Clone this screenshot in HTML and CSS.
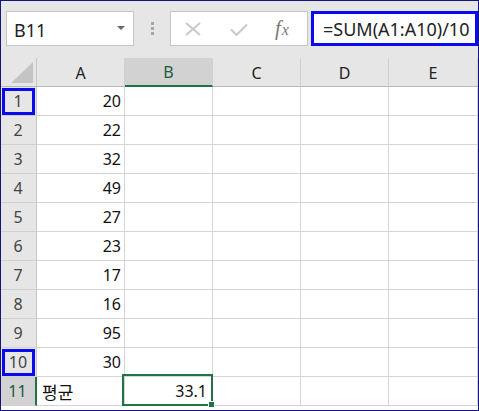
FILE: index.html
```html
<!DOCTYPE html>
<html>
<head>
<meta charset="utf-8">
<link rel="stylesheet" href="styles.css">
</head>
<body>
<div class="frame">
  <div class="toolbar">
    <div class="namebox">
      <span class="name">B11</span>
      <svg class="dd" width="8" height="4" viewBox="0 0 8 4"><polygon points="0,0 8,0 4,4" fill="#6a6a6a"/></svg>
    </div>
    <div class="dots"><span></span><span></span><span></span></div>
    <div class="fxbox">
      <svg class="ico-x" width="16" height="14" viewBox="0 0 16 14"><path d="M1 1 L15 13 M15 1 L1 13" stroke="#c8c8c8" stroke-width="2" fill="none"/></svg>
      <svg class="ico-ok" width="18" height="13" viewBox="0 0 18 13"><path d="M1 6.5 L6.5 12 L17 1.5" stroke="#c8c8c8" stroke-width="2" fill="none"/></svg>
      <span class="fx"><i>f</i><i class="fx-x">x</i></span>
    </div>
    <div class="formula">=SUM(A1:A10)/10</div>
  </div>
  <div class="sheet">
    <div class="hd corner"><svg width="22" height="21" viewBox="0 0 22 21"><polygon points="22,0 22,21 0,21" fill="#c4c4c4"/></svg></div>
    <div class="hd col">A</div>
    <div class="hd col sel-col">B</div>
    <div class="hd col">C</div>
    <div class="hd col">D</div>
    <div class="hd col last">E</div>

    <div class="hd row mark">1</div><div class="c num">20</div><div class="c"></div><div class="c"></div><div class="c"></div><div class="c last"></div>
    <div class="hd row">2</div><div class="c num">22</div><div class="c"></div><div class="c"></div><div class="c"></div><div class="c last"></div>
    <div class="hd row">3</div><div class="c num">32</div><div class="c"></div><div class="c"></div><div class="c"></div><div class="c last"></div>
    <div class="hd row">4</div><div class="c num">49</div><div class="c"></div><div class="c"></div><div class="c"></div><div class="c last"></div>
    <div class="hd row">5</div><div class="c num">27</div><div class="c"></div><div class="c"></div><div class="c"></div><div class="c last"></div>
    <div class="hd row">6</div><div class="c num">23</div><div class="c"></div><div class="c"></div><div class="c"></div><div class="c last"></div>
    <div class="hd row">7</div><div class="c num">17</div><div class="c"></div><div class="c"></div><div class="c"></div><div class="c last"></div>
    <div class="hd row">8</div><div class="c num">16</div><div class="c"></div><div class="c"></div><div class="c"></div><div class="c last"></div>
    <div class="hd row">9</div><div class="c num">95</div><div class="c"></div><div class="c"></div><div class="c"></div><div class="c last"></div>
    <div class="hd row mark">10</div><div class="c num">30</div><div class="c"></div><div class="c"></div><div class="c"></div><div class="c last"></div>
    <div class="hd row sel-row">11</div><div class="c txt">평균</div><div class="c num active">33.1</div><div class="c"></div><div class="c"></div><div class="c last"></div>
  </div>
</div>
</body>
</html>
```
FILE: styles.css
```css
html, body {
  margin: 0;
  padding: 0;
  background: #ffffff;
}
.frame {
  width: 477px;
  height: 409px;
  border: 1px solid #16167a;
  background: #ffffff;
  font-family: "Noto Sans", "Noto Sans CJK KR", sans-serif;
  overflow: hidden;
}
.toolbar {
  height: 57px;
  box-sizing: border-box;
  background: #e6e6e6;
  display: flex;
  align-items: flex-start;
  padding: 10px 0 0 5px;
}
.namebox {
  width: 128px;
  height: 35px;
  box-sizing: border-box;
  border: 1px solid #c6c6c6;
  background: #ffffff;
  display: flex;
  align-items: center;
  justify-content: space-between;
  padding: 2px 8px 0 7px;
}
.name {
  font-size: 18px;
  color: #222222;
}
.dd {
  margin-bottom: 3px;
}
.dots {
  width: 3px;
  margin: 11px 0 0 17px;
  display: flex;
  flex-direction: column;
  gap: 2px;
}
.dots span {
  width: 3px;
  height: 3px;
  background: #a6a6a6;
}
.fxbox {
  width: 138px;
  height: 35px;
  box-sizing: border-box;
  margin-left: 16px;
  border: 1px solid #c6c6c6;
  background: #ffffff;
  display: flex;
  align-items: center;
  padding-left: 14px;
}
.ico-x {
  margin-top: 1px;
}
.ico-ok {
  margin-left: 29px;
  margin-top: 2px;
}
.fx {
  margin-left: 27px;
  font-family: "Liberation Serif", "DejaVu Serif", serif;
  font-size: 21px;
  color: #7a7a7a;
  margin-top: -1px;
}
.fx i {
  font-style: italic;
}
.fx-x {
  font-size: 16px;
  margin-left: 1px;
}
.formula {
  width: 167px;
  height: 35px;
  box-sizing: border-box;
  margin-left: 3px;
  border: 3px solid #0a0af0;
  background: #ffffff;
  font-size: 18px;
  color: #222222;
  padding: 2px 0 0 9px;
  line-height: 26px;
  white-space: nowrap;
  overflow: hidden;
}
.sheet {
  display: grid;
  grid-template-columns: 36px 88px 88px 88px 88px 89px;
  grid-auto-rows: 29px;
  font-size: 16px;
}
.hd {
  box-sizing: border-box;
  background: #e6e6e6;
  color: #444444;
  display: flex;
  align-items: center;
  justify-content: center;
  position: relative;
}
.corner {
  border-right: 1px solid #c6c6c6;
  border-bottom: 1px solid #b8b8b8;
  justify-content: flex-end;
  align-items: flex-end;
  padding: 0 3px 3px 0;
}
.col {
  border-right: 1px solid #d0d0d0;
  border-bottom: 1px solid #b8b8b8;
  color: #222222;
  padding-top: 1px;
}
.sel-col {
  background: #d2d2d2;
  color: #1e5b40;
  border-bottom: 2px solid #217346;
}
.row {
  border-right: 1px solid #c6c6c6;
  border-bottom: 1px solid #d0d0d0;
  padding-right: 1px;
}
.sel-row {
  background: #d2d2d2;
  color: #1e5b40;
  border-right: 2px solid #217346;
}
.mark::after {
  content: "";
  position: absolute;
  top: 1px;
  left: 1px;
  right: 1px;
  bottom: 0;
  border: 3px solid #0a0af0;
}
.c {
  box-sizing: border-box;
  border-right: 1px solid #d4d4d4;
  border-bottom: 1px solid #d4d4d4;
  display: flex;
  align-items: center;
  color: #111111;
  position: relative;
}
.num {
  justify-content: flex-end;
  padding-right: 3px;
}
.txt {
  padding-left: 5px;
  font-size: 17px;
  font-family: "Noto Sans CJK KR", sans-serif;
}
.active {
  padding-right: 5px;
}
.active::after {
  content: "";
  position: absolute;
  top: -3px;
  left: -3px;
  right: -1px;
  bottom: -1px;
  border: 2px solid #217346;
}
.active::before {
  content: "";
  position: absolute;
  right: -3px;
  bottom: -3px;
  width: 5px;
  height: 5px;
  background: #217346;
  border: 1px solid #ffffff;
  z-index: 1;
}
```
